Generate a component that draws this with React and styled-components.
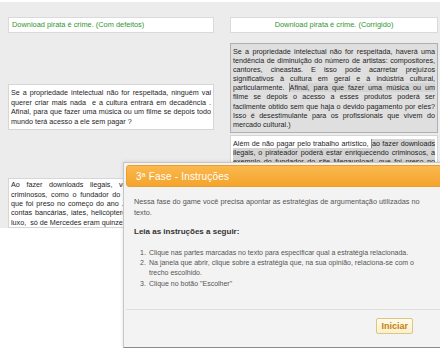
import React from 'react';
import styled, { createGlobalStyle } from 'styled-components';

const GlobalStyle = createGlobalStyle`
  html, body {
    margin: 0;
    padding: 0;
    background: #fff;
    overflow: hidden;
  }
  body {
    font-family: "Liberation Sans", Arial, sans-serif;
  }
`;

// Page and board behind the dialog
const Page = styled.div`
  position: relative;
  width: 440px;
  height: 348px;
  overflow: hidden;
`;

const Board = styled.div`
  margin-top: 2px;
  padding: 15px 2px 0 8px;
  background: #ececec;
  display: flex;
  flex-direction: column;
`;

const Row = styled.div`
  display: grid;
  grid-template-columns: 206px 208px;
  column-gap: 16px;
  align-items: end;
  margin-top: ${p => p.$gap || 0}px;
`;

const TitleBox = styled.div`
  height: 16px;
  box-sizing: border-box;
  background: #fff;
  border: 1px solid #dadada;
  padding: 0 3px;
  font-size: 7.4px;
  line-height: 14px;
  color: #2f962f;
  text-align: ${p => (p.$center ? 'center' : 'left')};
`;

const TextBox = styled.div`
  box-sizing: border-box;
  min-height: ${p => p.$minH || 0}px;
  background: ${p => (p.$marked ? '#dfdfdf' : '#fff')};
  border: 1px solid ${p => (p.$marked ? '#b0b0b0' : '#d6d6d6')};
  padding: ${p => p.$pad || '3px 2px 2px'};
  font-size: 7.2px;
  line-height: ${p => p.$lh || 9.3}px;
  color: #1e1e1e;
`;

const Line = styled.span`
  display: block;
  text-align: justify;
  text-align-last: ${p => (p.$last ? 'left' : 'justify')};
`;

const Mark = styled.span`
  background: #d4d4d4;
  border-left: ${p => (p.$start ? '1px solid #8c8c8c' : 'none')};
`;

// Dialog
const Modal = styled.div`
  position: absolute;
  left: 123px;
  top: 162px;
  width: 330px;
  height: 186px;
  box-sizing: border-box;
  padding: 2px;
  background: #f3f3f3;
  border: 1px solid #c6c6c6;
  border-bottom-color: #8a8a8a;
  box-shadow: 0 0 4px rgba(0, 0, 0, 0.12);
  display: flex;
  flex-direction: column;
`;

const ModalHeader = styled.div`
  height: 22px;
  box-sizing: border-box;
  border: 1px solid #ec9e30;
  border-radius: 3px;
  background: linear-gradient(#fab84e, #f4a42c);
  color: #fff;
  font-size: 10px;
  padding-left: 9px;
  display: flex;
  align-items: center;
  letter-spacing: 0.2px;
`;

const ModalBody = styled.div`
  flex: 1;
  padding: 9px 8px 0 8px;
  color: #555;
`;

const Intro = styled.p`
  margin: 0;
  font-size: 7.3px;
  line-height: 11px;
`;

const Lead = styled.p`
  margin: 9px 0 0;
  font-size: 8px;
  font-weight: bold;
  color: #333;
`;

const Steps = styled.div`
  margin-top: 12px;
  padding-left: 6px;
  display: flex;
  flex-direction: column;
`;

const Step = styled.div`
  display: flex;
  font-size: 7px;
  line-height: 10.2px;
`;

const StepNum = styled.span`
  width: 9px;
  flex: none;
`;

const ModalFooter = styled.div`
  height: 36px;
  box-sizing: border-box;
  border-top: 1px solid #dedede;
  display: flex;
  justify-content: flex-end;
  align-items: flex-start;
  padding: 8px 37px 0 0;
`;

const StartButton = styled.button`
  height: 16px;
  padding: 0 4px;
  border: 1px solid #dcc48a;
  border-radius: 2px;
  background: linear-gradient(#fffbea, #fcf0c8);
  color: #c47e1c;
  font-family: "Liberation Sans", Arial, sans-serif;
  font-size: 9px;
  font-weight: bold;
  cursor: pointer;
`;

const App = () => (
  <Page>
    <GlobalStyle />
    <Board>
      <Row>
        <TitleBox>Download pirata é crime. (Com defeitos)</TitleBox>
        <TitleBox $center>Download pirata é crime. (Corrigido)</TitleBox>
      </Row>

      <Row $gap={10}>
        <TextBox $lh={9.7} style={{ marginBottom: 3 }}>
          <Line>Se a propriedade intelectual não for respeitada, ninguém vai</Line>
          <Line>querer criar mais nada &nbsp;e a cultura entrará em decadência .</Line>
          <Line>Afinal, para que fazer uma música ou um filme se depois todo</Line>
          <Line $last>mundo terá acesso a ele sem pagar ?</Line>
        </TextBox>
        <TextBox $marked $lh={9.1} $pad="3px 2px 3px">
          <Line>Se a propriedade intelectual não for respeitada, haverá uma</Line>
          <Line>tendência de diminuição do número de artistas: compositores,</Line>
          <Line>cantores, cineastas. E isso pode acarretar prejuízos</Line>
          <Line>significativos à cultura em geral e à indústria cultural,</Line>
          <Line>particularmente. <Mark $start>Afinal, para que fazer uma música ou um</Mark></Line>
          <Line>filme se depois o acesso a esses produtos poderá ser</Line>
          <Line>facilmente obtido sem que haja o devido pagamento por eles?</Line>
          <Line>Isso é desestimulante para os profissionais que vivem do</Line>
          <Line $last>mercado cultural.)</Line>
        </TextBox>
      </Row>

      <Row $gap={2}>
        <TextBox $pad="1px 2px 0">
          <Line>Ao fazer downloads ilegais, você estará enriquecendo</Line>
          <Line>criminosos, como o fundador do site Megaupload, Dotcom,</Line>
          <Line>que foi preso no começo do ano . A polícia encontrou várias</Line>
          <Line>contas bancárias, iates, helicópteros e dezenas de carros de</Line>
          <Line $last>luxo, &nbsp;só de Mercedes eram quinze.</Line>
        </TextBox>
        <TextBox $lh={9} $pad="3px 2px 2px" $minH={93}>
          <Line>Além de não pagar pelo trabalho artístico, <Mark $start>ao fazer downloads</Mark></Line>
          <Line><Mark>ilegais, o pirateador poderá estar enriquecendo criminosos, a</Mark></Line>
          <Line><Mark>exemplo do fundador do site Megaupload, que foi preso no</Mark></Line>
        </TextBox>
      </Row>
    </Board>

    <Modal>
      <ModalHeader>3ª Fase - Instruções</ModalHeader>
      <ModalBody>
        <Intro>
          Nessa fase do game você precisa apontar as estratégias de argumentação utilizadas no
          <br />
          texto.
        </Intro>
        <Lead>Leia as instruções a seguir:</Lead>
        <Steps>
          <Step>
            <StepNum>1.</StepNum>
            <span>Clique nas partes marcadas no texto para especificar qual a estratégia relacionada.</span>
          </Step>
          <Step>
            <StepNum>2.</StepNum>
            <span>
              Na janela que abrir, clique sobre a estratégia que, na sua opinião, relaciona-se com o
              <br />
              trecho escolhido.
            </span>
          </Step>
          <Step>
            <StepNum>3.</StepNum>
            <span>Clique no botão "Escolher"</span>
          </Step>
        </Steps>
      </ModalBody>
      <ModalFooter>
        <StartButton>Iniciar</StartButton>
      </ModalFooter>
    </Modal>
  </Page>
);

export default App;
